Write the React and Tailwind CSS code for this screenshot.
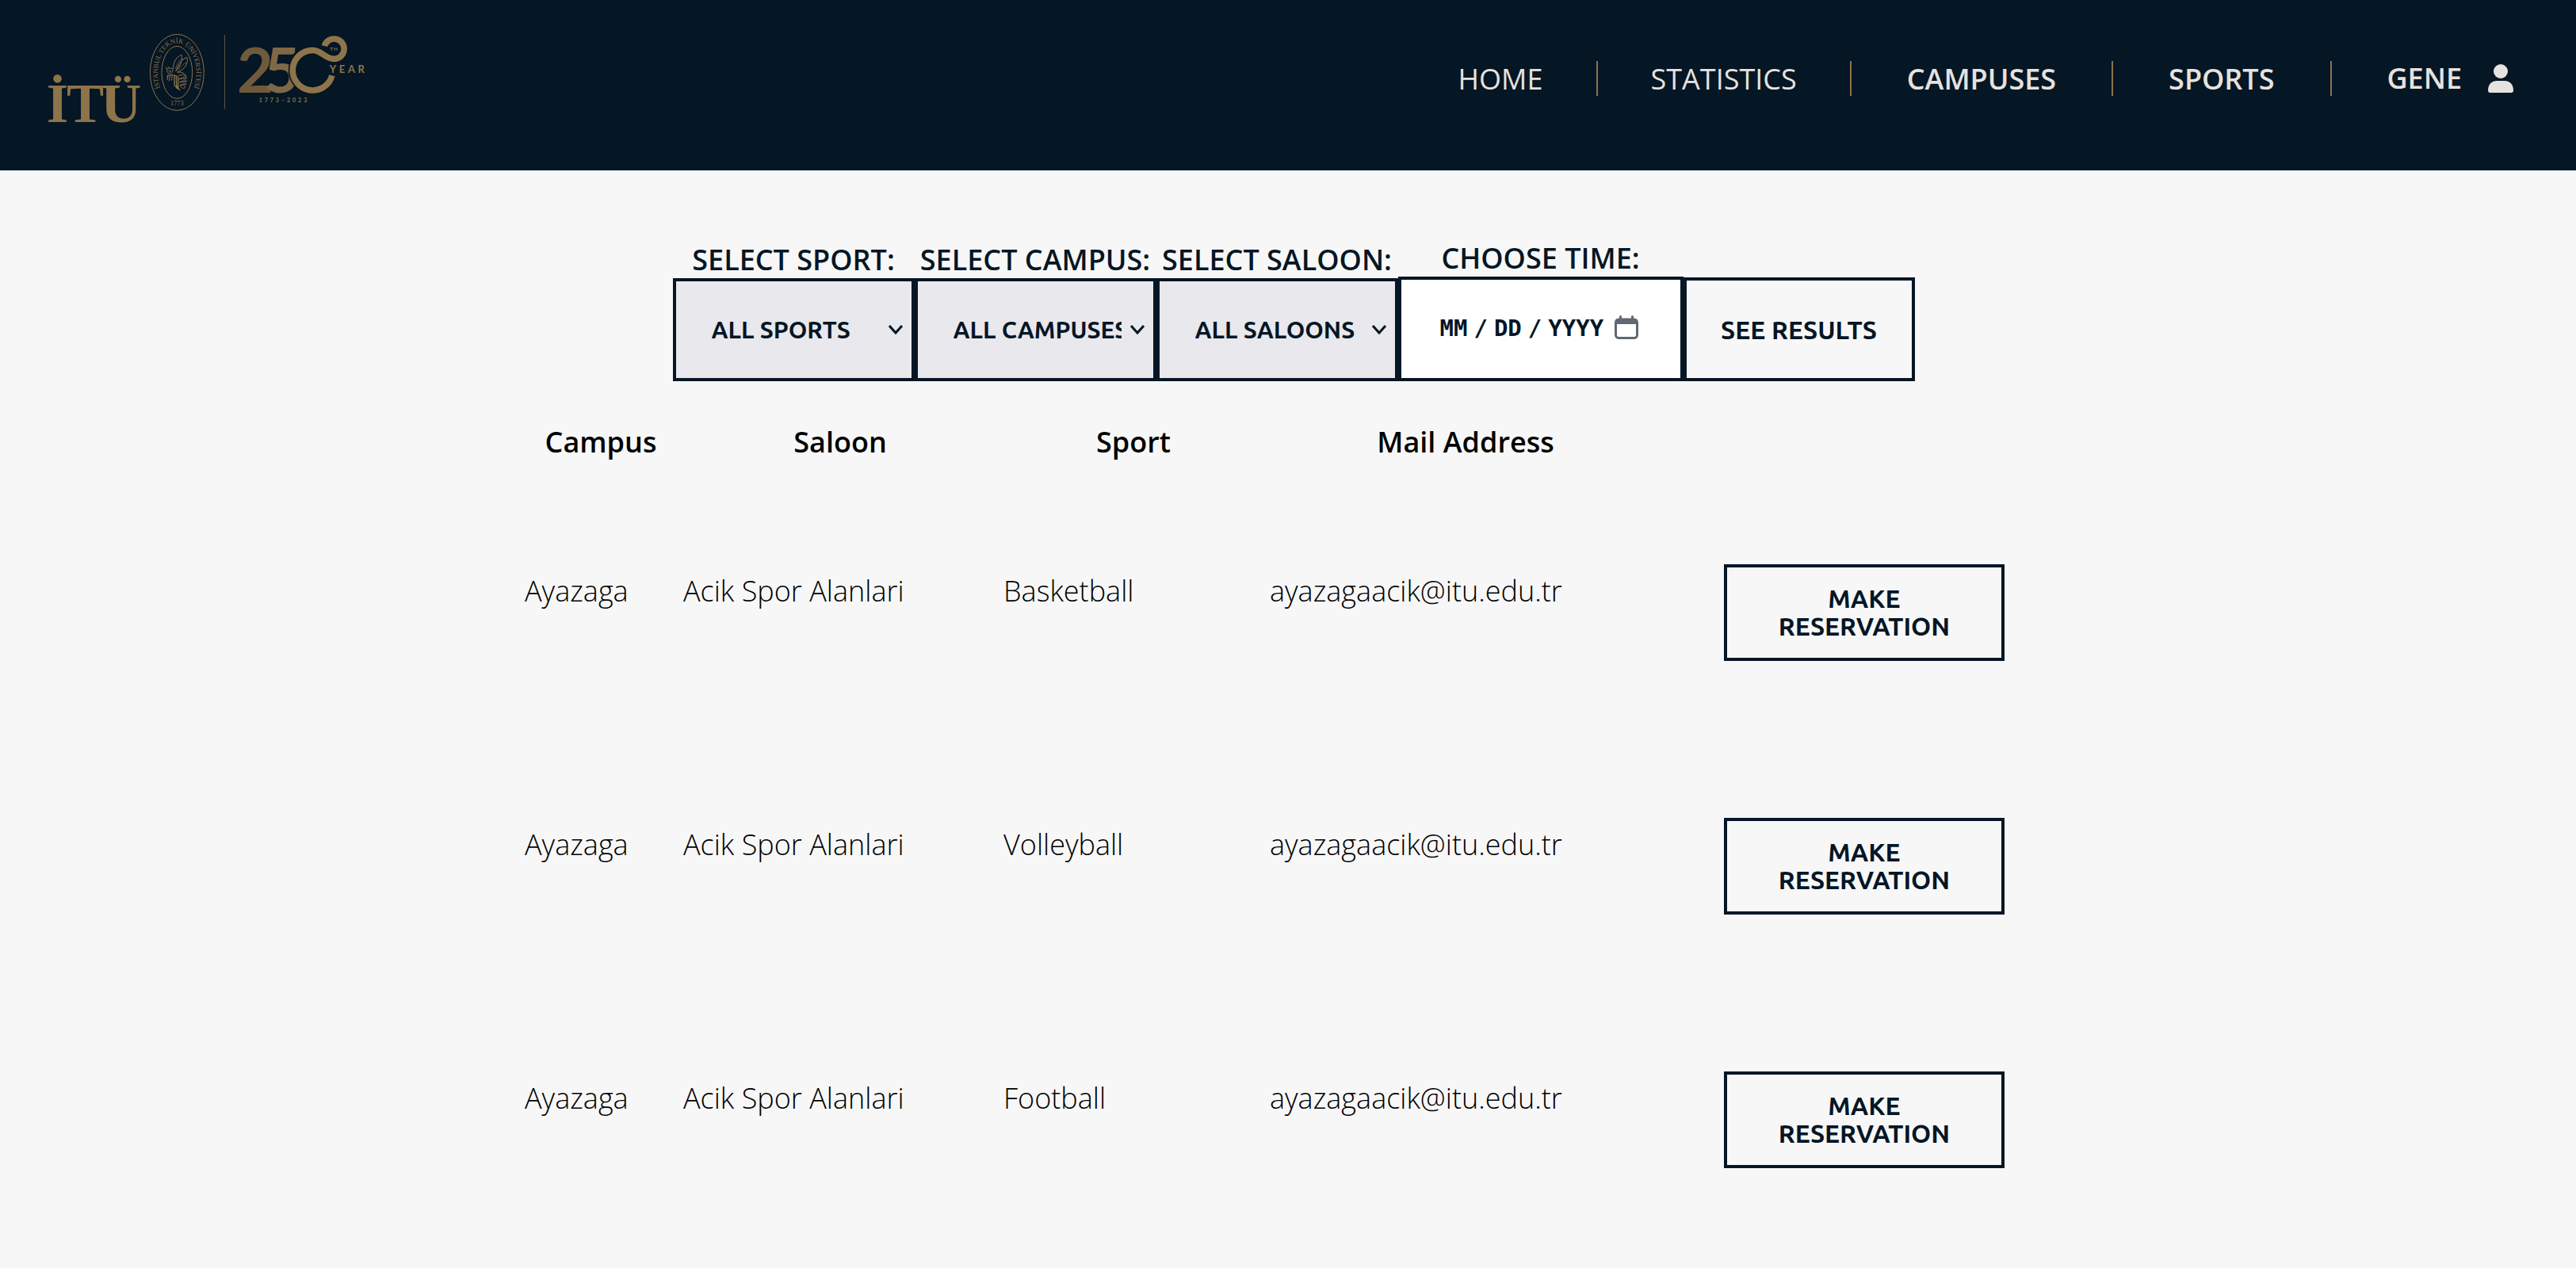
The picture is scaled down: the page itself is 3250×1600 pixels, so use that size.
const NAV = [
  { label: 'HOME', style: 'px-[67px] font-normal' },
  { label: 'STATISTICS', style: 'px-[67px] font-normal' },
  { label: 'CAMPUSES', style: 'px-[70px] font-semibold' },
  { label: 'SPORTS', style: 'px-[70px] font-semibold' },
];

const FILTERS = [
  { id: 'sport', label: 'SELECT SPORT:', option: 'ALL SPORTS' },
  { id: 'campus', label: 'SELECT CAMPUS:', option: 'ALL CAMPUSES' },
  { id: 'saloon', label: 'SELECT SALOON:', option: 'ALL SALOONS' },
];

const ROWS = ['Basketball', 'Volleyball', 'Football'];

function Logo() {
  return (
    <svg viewBox="60 60 1215 351" className="h-[117px] w-[405px] shrink-0 overflow-visible" role="img" aria-label="İTÜ 250th Year">
      <text x="56 132 262" y="401" fontFamily="'Liberation Serif', serif" fontWeight="700" fontSize="212" fill="#8d744a">İTÜ</text>

      <g fill="none" stroke="#8d744a">
        <ellipse cx="550" cy="214" rx="102" ry="144" strokeWidth="3" />
        <ellipse cx="550" cy="214" rx="58" ry="99" strokeWidth="3" />
        <path id="seal" d="M494 290 A73 114 0 1 1 606 290" stroke="none" />
        <g strokeWidth="3" strokeLinecap="round" strokeLinejoin="round">
          <path d="M534 204 C536 176 546 156 567 148 C574 164 562 192 546 208" />
          <path d="M546 208 C556 180 572 160 588 158 C594 180 578 206 552 212" />
          <path d="M544 200 C550 184 556 172 564 164 M556 204 C564 192 574 182 584 178" strokeWidth="2" />
          <path d="M530 200 C518 192 508 204 514 214 C522 222 534 216 534 206 M514 200 L506 197 M520 196 L516 193" />
          <path d="M518 210 C524 204 528 208 526 212" />
          <path d="M516 222 L513 242 M524 222 L520 246 M532 222 L530 244 M512 230 C524 222 538 222 550 228" />
          <path d="M540 226 L540 262 L552 276 M547 228 L548 264 L560 281 M554 230 L554 272" strokeWidth="4" />
          <path d="M552 214 C566 210 582 218 585 230" />
          <path d="M556 226 C570 218 584 226 586 236 C576 232 566 232 558 240" />
          <path d="M558 240 C570 234 584 238 586 248 C576 244 566 246 560 252" />
          <path d="M560 252 C572 246 584 250 584 260 C576 256 568 258 562 264" />
          <path d="M562 264 C572 258 582 262 580 272 C574 276 566 274 562 264" />
        </g>
      </g>
      <g fill="#8d744a" fontFamily="'Liberation Serif', serif">
        <text fontSize="26">
          <textPath href="#seal" startOffset="50%" textAnchor="middle">İSTANBUL TEKNİK ÜNİVERSİTESİ</textPath>
        </text>
        <text x="550" y="340" fontSize="25" textAnchor="middle">1773</text>
      </g>

      <rect x="729" y="72" width="3" height="280" fill="#5d5340" />

      <g fontFamily="Lato, sans-serif" fontWeight="700">
        <text x="777" y="292" fontSize="238" fill="#6f5a3c">2</text>
        <text x="880" y="292" fontSize="234" fill="#7f6845">5</text>
        <g fill="none">
          <path d="M1137 226 A76 76 0 1 1 1063 130 C1098 130 1110 163 1146 163 A38 38 0 1 0 1108 114" stroke="#051625" strokeWidth="33" />
          <path d="M1137 226 A76 76 0 1 1 1063 130 C1098 130 1110 163 1146 163 A38 38 0 1 0 1108 114" stroke="#8d744a" strokeWidth="23" />
        </g>
        <text x="1129" y="132" fontSize="19" letterSpacing="3" fill="#8d744a">TH</text>
        <text x="1127" y="216" fontSize="39" letterSpacing="11" fill="#8d744a">YEAR</text>
        <text x="860" y="327" fontSize="21" letterSpacing="9" fill="#8d744a">1773–2023</text>
      </g>
    </svg>
  );
}

function PersonIcon() {
  return (
    <svg viewBox="0 0 32 36" className="h-9 w-8" fill="currentColor" aria-hidden="true">
      <circle cx="16" cy="9" r="9" />
      <path d="M0 33 C0 25 5 21 11 21 H21 C27 21 32 25 32 33 Q32 36 29 36 H3 Q0 36 0 33 Z" />
    </svg>
  );
}

function CalendarIcon() {
  return (
    <svg viewBox="0 0 30 30" className="pointer-events-none absolute top-[49px] right-[57px] size-[30px]" fill="none" aria-hidden="true">
      <rect x="1.5" y="5" width="27" height="23.5" rx="4" stroke="#5f6873" strokeWidth="3" />
      <path d="M1 11 V8 Q1 4 5 4 H25 Q29 4 29 8 V11 Z" fill="#5f6873" />
      <path d="M7.5 1.5 V5 M22.5 1.5 V5" stroke="#5f6873" strokeWidth="3" strokeLinecap="round" />
    </svg>
  );
}

function Header() {
  return (
    <header className="flex items-start justify-between bg-[#051625] pr-[79px] pb-[58px] pl-[60px] pt-10 text-[#e6e2de]">
      <a href="#home"><Logo /></a>
      <nav className="mt-[37px] flex h-11 text-[36px] leading-[46px]">
        {NAV.map((item) => (
          <a key={item.label} href={'#' + item.label.toLowerCase()} className={`border-r-2 border-[#8d744a] ${item.style}`}>
            {item.label}
          </a>
        ))}
        <a href="#profile" className="flex items-center gap-[33px] pl-[70px] font-semibold">
          GENE
          <PersonIcon />
        </a>
      </nav>
    </header>
  );
}

function Filters() {
  return (
    <form className="flex items-end justify-center pl-[14px] text-[#051625]">
      {FILTERS.map((f) => (
        <div key={f.id} className="flex w-[305px] flex-col">
          <label htmlFor={f.id} className="text-center text-[36px] leading-[47px] font-semibold">{f.label}</label>
          <div className="relative">
            <select id={f.id} className="h-[130px] w-full appearance-none rounded-none border-4 border-[#051625] bg-[#e9e8ed] pr-10 pl-[45px] font-[Ubuntu,sans-serif] text-[30px] font-bold">
              <option>{f.option}</option>
            </select>
            <svg viewBox="0 0 18 12" className="pointer-events-none absolute top-1/2 right-[15px] h-3 w-[18px] -translate-y-1/2" fill="none" stroke="#051625" strokeWidth="3" aria-hidden="true">
              <path d="M1 1 L9 10 L17 1" />
            </svg>
          </div>
        </div>
      ))}
      <div className="flex w-[360px] flex-col">
        <label htmlFor="time" className="text-center text-[36px] leading-[47px] font-semibold">CHOOSE TIME:</label>
        <div className="relative">
          <input
            id="time"
            type="date"
            className="block h-[132px] w-full border-4 border-[#051625] bg-white px-[49px] font-['DejaVu_Sans_Mono',monospace] text-[29px] font-bold uppercase [&::-webkit-calendar-picker-indicator]:m-0 [&::-webkit-calendar-picker-indicator]:opacity-0 [&::-webkit-datetime-edit-day-field]:p-0 [&::-webkit-datetime-edit-month-field]:p-0 [&::-webkit-datetime-edit-year-field]:p-0 [&::-webkit-datetime-edit-text]:px-2"
          />
          <CalendarIcon />
        </div>
      </div>
      <button type="button" className="h-[131px] w-[292px] border-4 border-[#051625] font-[Ubuntu,sans-serif] text-[32px] font-bold">
        SEE RESULTS
      </button>
    </form>
  );
}

function Saloons() {
  return (
    <table className="mx-auto mt-[52px] w-full max-w-[1934px] table-fixed text-[36px] leading-[49px] text-black">
      <colgroup>
        <col className="w-[200px]" />
        <col className="w-[404px]" />
        <col className="w-[336px]" />
        <col className="w-[502px]" />
        <col />
      </colgroup>
      <thead>
        <tr>
          <th scope="col" className="pb-[3px] font-semibold">Campus</th>
          <th scope="col" className="pb-[3px] font-semibold">Saloon</th>
          <th scope="col" className="pb-[3px] font-semibold">Sport</th>
          <th scope="col" className="pb-[3px] font-semibold">Mail Address</th>
          <td />
        </tr>
      </thead>
      <tbody className="font-light">
        {ROWS.map((sport) => (
          <tr key={sport} className="h-80">
            <td className="pl-1">Ayazaga</td>
            <td className="pl-1">Acik Spor Alanlari</td>
            <td className="pl-1">{sport}</td>
            <td className="pl-1">ayazagaacik@itu.edu.tr</td>
            <td className="pt-14 pl-3 text-center">
              <button type="button" className="w-[354px] border-4 border-[#051625] px-14 py-[22px] font-[Ubuntu,sans-serif] text-[32px] leading-[35px] font-bold text-[#051625]">
                MAKE RESERVATION
              </button>
            </td>
          </tr>
        ))}
      </tbody>
    </table>
  );
}

export default function App() {
  return (
    <div className="min-h-screen bg-[#f7f7f7] font-['Open_Sans',sans-serif]">
      <Header />
      <main className="pt-[87px]">
        <Filters />
        <Saloons />
      </main>
    </div>
  );
}
